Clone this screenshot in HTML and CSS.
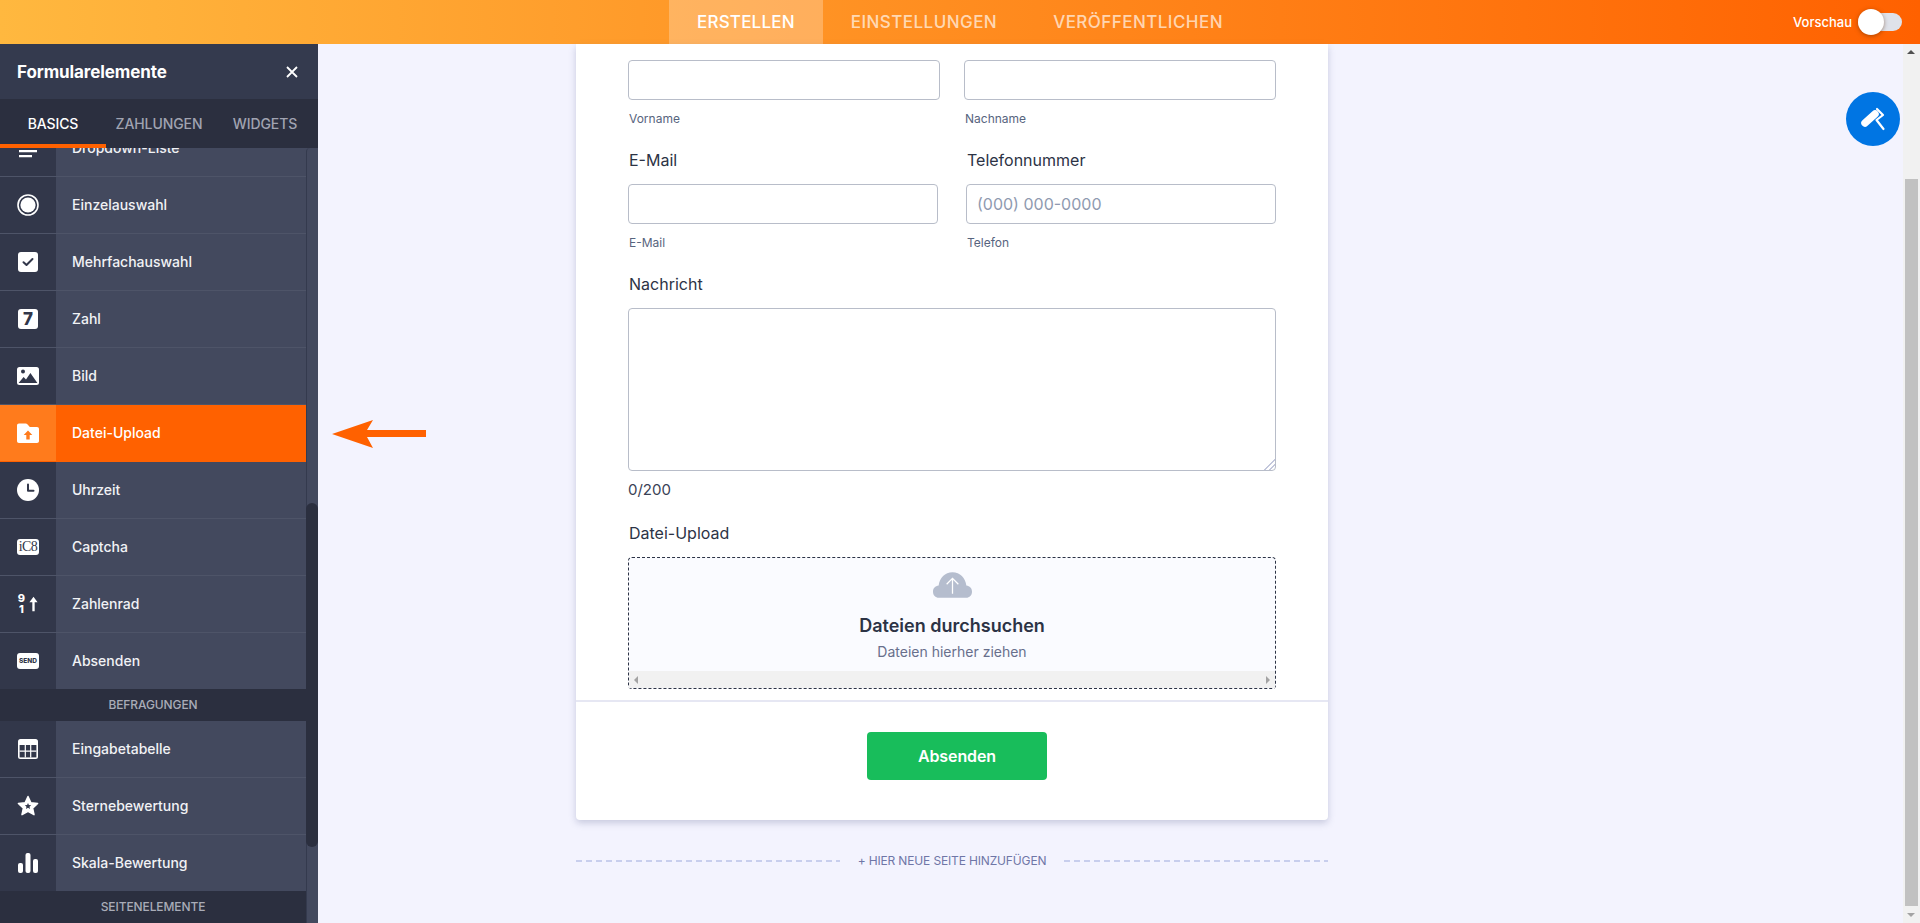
FILE: index.html
```html
<!DOCTYPE html>
<html lang="de">
<head>
<meta charset="utf-8">
<title>Formular erstellen</title>
<link rel="stylesheet" href="styles.css">
</head>
<body>
<header class="topbar">
  <div></div>
  <nav class="topnav">
    <a class="topnav-item is-active">ERSTELLEN</a>
    <a class="topnav-item">EINSTELLUNGEN</a>
    <a class="topnav-item">VERÖFFENTLICHEN</a>
  </nav>
  <div class="preview">
    <span class="preview-label">Vorschau</span>
    <span class="toggle"><span class="toggle-knob"></span></span>
  </div>
</header>

<div class="workspace">
  <aside class="sidebar">
    <div class="side-head">
      <span class="side-title">Formularelemente</span>
      <svg class="side-close" viewBox="0 0 12 12"><path d="M1 1l10 10M11 1L1 11"/></svg>
    </div>
    <div class="side-tabs">
      <span class="side-tab is-active">BASICS</span>
      <span class="side-tab">ZAHLUNGEN</span>
      <span class="side-tab">WIDGETS</span>
    </div>
    <div class="side-body">
      <div class="side-list">
        <div class="el el-first"><span class="el-icon"><svg viewBox="0 0 24 24" class="ico"><path class="w" d="M3 4h18v2.200H3zM3 9h18v2.200H3zM3 14h18v2.200H3zM3 19h13v2.200H3z"/></svg></span><span class="el-name">Dropdown-Liste</span></div>
        <div class="el"><span class="el-icon"><svg viewBox="0 0 24 24" class="ico"><circle cx="12" cy="12" r="10" class="ring"/><circle cx="12" cy="12" r="7.600" class="w"/></svg></span><span class="el-name">Einzelauswahl</span></div>
        <div class="el"><span class="el-icon"><svg viewBox="0 0 24 24" class="ico"><rect x="2" y="2" width="20" height="20" rx="3" class="w"/><path d="M7.500 12.200l3 2.800 6-6" class="dk"/></svg></span><span class="el-name">Mehrfachauswahl</span></div>
        <div class="el"><span class="el-icon"><span class="badge-7">7</span></span><span class="el-name">Zahl</span></div>
        <div class="el"><span class="el-icon"><svg viewBox="0 0 24 24" class="ico"><rect x="1" y="3" width="22" height="18" rx="2.500" class="w"/><circle cx="7" cy="7.600" r="2" class="df"/><path d="M2.600 19l5-6 2.400 2.400L14.400 9l7 10z" class="df"/></svg></span><span class="el-name">Bild</span></div>
        <div class="el is-active"><span class="el-icon"><svg viewBox="0 0 24 24" class="ico"><path class="w" d="M3 2.500h6.600c.8 0 1.400.3 2 1l2.200 2.600H21c1.200 0 2 .8 2 2V20c0 1.200-.8 2-2 2H3c-1.200 0-2-.8-2-2V4.500c0-1.200.8-2 2-2z"/><path d="M12 9.500l4.300 4.500h-2.600v4.500h-3.400V14H7.700z" class="of"/></svg></span><span class="el-name">Datei-Upload</span></div>
        <div class="el"><span class="el-icon"><svg viewBox="0 0 24 24" class="ico"><circle cx="12" cy="12" r="11" class="w"/><path d="M12 6.500v6.300h5.500" class="dk"/></svg></span><span class="el-name">Uhrzeit</span></div>
        <div class="el"><span class="el-icon"><span class="badge-cap">iC8</span></span><span class="el-name">Captcha</span></div>
        <div class="el"><span class="el-icon"><span class="spinner"><span class="spin-nums"><b>9</b><b>1</b></span><svg viewBox="0 0 10 16" class="spin-arrow"><path class="w" d="M5 0l4.500 6H6.300v10H3.700V6H.5z"/></svg></span></span><span class="el-name">Zahlenrad</span></div>
        <div class="el el-last"><span class="el-icon"><span class="badge-send">SEND</span></span><span class="el-name">Absenden</span></div>
        <div class="group">BEFRAGUNGEN</div>
        <div class="el"><span class="el-icon"><svg viewBox="0 0 24 24" class="ico"><rect x="2" y="2" width="20" height="20" rx="2.500" class="w"/><path d="M3.600 8h16.800v12.400H3.600z" class="df"/><path class="w" d="M8.700 8h1.200v12.400H8.700zM14.100 8h1.200v12.400h-1.200zM3.600 13.600h16.800v1.200H3.600z"/></svg></span><span class="el-name">Eingabetabelle</span></div>
        <div class="el"><span class="el-icon"><svg viewBox="0 0 24 24" class="ico"><path class="w wl" d="M12 2.500l2.900 6.200 6.700.8-5 4.600 1.400 6.600-6-3.400-6 3.400 1.400-6.600-5-4.600 6.700-.8z"/><path class="df" d="M12 9l.9 2.100 2.300.2-1.700 1.500.5 2.200-2-1.200-2 1.200.5-2.200-1.700-1.500 2.300-.2z"/></svg></span><span class="el-name">Sternebewertung</span></div>
        <div class="el el-last"><span class="el-icon"><svg viewBox="0 0 24 24" class="ico"><rect x="2" y="12" width="5" height="10" rx="2" class="w"/><rect x="9.500" y="2" width="5" height="20" rx="2" class="w"/><rect x="17" y="8" width="5" height="14" rx="2" class="w"/></svg></span><span class="el-name">Skala-Bewertung</span></div>
        <div class="group">SEITENELEMENTE</div>
      </div>
      <div class="side-scroll"><span class="side-thumb"></span></div>
    </div>
  </aside>

  <main class="canvas">
    <section class="card">
      <div class="card-body">
        <div class="row">
          <div class="field w312"><input class="input" type="text" aria-label="Vorname"><div class="sub">Vorname</div></div>
          <div class="field w312"><input class="input" type="text" aria-label="Nachname"><div class="sub">Nachname</div></div>
        </div>
        <div class="row row-wide">
          <div class="field w310"><label class="lbl">E-Mail</label><input class="input" type="text" aria-label="E-Mail"><div class="sub">E-Mail</div></div>
          <div class="field w310"><label class="lbl">Telefonnummer</label><input class="input" type="text" placeholder="(000) 000-0000"><div class="sub">Telefon</div></div>
        </div>
        <div class="block">
          <label class="lbl">Nachricht</label>
          <textarea class="area" aria-label="Nachricht"></textarea>
          <div class="count">0/200</div>
        </div>
        <div class="block">
          <label class="lbl">Datei-Upload</label>
          <div class="drop">
            <div class="drop-main">
              <svg class="cloud" viewBox="0 0 40 26"><path class="cloud-f" d="M6 26C2.500 26 0 23.300 0 19.800c0-3.300 2.300-5.800 5.800-6.200C6.700 6 12.300 0 20 0s13.300 6 14.200 13.600c3.500.4 5.800 2.900 5.800 6.200 0 3.500-2.500 6.200-6 6.200z"/><path class="cloud-s" d="M20 22V6.500M14 12.200l6-6 6 6"/></svg>
              <div class="drop-title">Dateien durchsuchen</div>
              <div class="drop-sub">Dateien hierher ziehen</div>
            </div>
            <div class="hscroll"><span class="tri-l"></span><span class="tri-r"></span></div>
          </div>
        </div>
      </div>
      <div class="card-foot"><button class="submit" type="button">Absenden</button></div>
    </section>
    <div class="addpage"><span class="dash"></span><span class="addpage-text">+ HIER NEUE SEITE HINZUFÜGEN</span><span class="dash"></span></div>
  </main>

  <div class="vscroll"><span class="tri-u"></span><span class="vthumb"></span><span class="tri-d"></span></div>
</div>

<svg class="pointer" viewBox="0 0 94 28"><path d="M0 14L41 0l-6 10h59v7H35l6 11z"/></svg>
<button class="paint" type="button" aria-label="Design"><svg viewBox="0 0 54 54"><path class="paint-roller" d="M19 31l10-9"/><path class="paint-line" d="M31 17l6 6-6.500 5 7 9"/></svg></button>
</body>
</html>
```
FILE: styles.css
```css
* { box-sizing: border-box; }
html, body { margin: 0; height: 923px; overflow: hidden; }
body { position: relative; background: #f3f3fe; font-family: Inter, "Liberation Sans", sans-serif; color: #2c3345; }

.topbar { height: 44px; display: grid; grid-template-columns: 1fr auto 1fr; background: linear-gradient(90deg, #ffb83f, #ff6100); }
.topnav { display: flex; }
.topnav-item { display: flex; align-items: center; padding: 0 28px; font-size: 17px; font-weight: 500; letter-spacing: .45px; color: rgba(255,255,255,.68); }
.topnav-item.is-active { background: rgba(255,255,255,.26); color: #fff; letter-spacing: .2px; }
.preview { display: flex; align-items: center; justify-content: flex-end; padding-right: 18px; gap: 6px; }
.preview-label { font-size: 13px; font-weight: 500; color: #fff; }
.toggle { position: relative; width: 44px; height: 18px; border-radius: 9px; background: #dfe2ea; }
.toggle-knob { position: absolute; left: 0; top: -4px; width: 26px; height: 26px; border-radius: 50%; background: #fff; box-shadow: 0 1px 4px rgba(90,40,0,.5); }

.workspace { display: flex; height: 879px; }
.sidebar { width: 318px; flex: none; display: flex; flex-direction: column; background: #43495e; }
.side-head { height: 55px; flex: none; display: flex; align-items: center; justify-content: space-between; padding: 0 20px 0 17px; background: #343a4e; }
.side-title { font-size: 17px; font-weight: 700; color: #fff; letter-spacing: -.1px; }
.side-close { width: 12px; height: 12px; fill: none; stroke: #fff; stroke-width: 1.800; }
.side-tabs { height: 49px; flex: none; display: flex; background: #2b2f3f; position: relative; z-index: 1; }
.side-tab { width: 106px; height: 49px; display: flex; align-items: center; justify-content: center; padding-bottom: 1px; font-size: 14px; font-weight: 500; letter-spacing: -.1px; color: #a0a3b1; }
.side-tab.is-active { color: #fff; border-bottom: 4px solid #ff6100; padding-top: 4px; }
.side-body { position: relative; flex: 1; min-height: 0; display: flex; overflow: hidden; }
.side-list { width: 306px; flex: none; }
.el { height: 57px; display: flex; border-bottom: 1px solid #4e5468; background: #43495e; }
.el-first { margin-top: -28px; }
.el-last { height: 56px; border-bottom: 0; }
.el-icon { width: 56px; flex: none; display: flex; align-items: center; justify-content: center; background: #32374a; }
.el-name { padding: 0 0 2px 16px; align-self: center; font-size: 14px; font-weight: 500; color: #f1f2f5; }
.el.is-active { background: #ff6100; border-bottom-color: #ff6100; }
.el.is-active .el-icon { background: #ff7b1c; }
.el.is-active .el-name { color: #fff; }
.group { height: 32px; display: flex; align-items: center; justify-content: center; padding-bottom: 1px; background: #2b2f3f; font-size: 12px; font-weight: 500; letter-spacing: -.1px; color: #a9acb8; }
.side-scroll { position: relative; width: 12px; flex: none; background: #43495e; border-left: 1px solid #343a4e; border-radius: 4px 4px 0 0; }
.side-thumb { position: absolute; left: -1px; right: 0; top: 355px; height: 344px; border-radius: 6px; background: #2b2f3f; }

.ico { width: 24px; height: 24px; display: block; }
.w { fill: #fff; }
.wl { stroke: #fff; stroke-width: 1.500; stroke-linejoin: round; }
.df { fill: #32374a; }
.of { fill: #ff7b1c; }
.ring { fill: none; stroke: #fff; stroke-width: 1.600; }
.dk { fill: none; stroke: #32374a; stroke-width: 2; stroke-linecap: round; stroke-linejoin: round; }
.badge-7 { width: 20px; height: 20px; display: flex; align-items: center; justify-content: center; border-radius: 3px; background: #fff; font-size: 17px; font-weight: 800; color: #32374a; }
.badge-cap { width: 22px; height: 16px; display: flex; align-items: center; justify-content: center; border-radius: 3px; background: #fff; font-family: "Liberation Serif", serif; font-size: 14px; letter-spacing: -.5px; font-weight: 400; color: #32374a; }
.badge-send { width: 22px; height: 16px; display: flex; align-items: center; justify-content: center; border-radius: 3px; background: #fff; font-size: 6.500px; font-weight: 800; color: #32374a; }
.spinner { display: flex; align-items: center; gap: 4px; }
.spin-nums { display: flex; flex-direction: column; align-items: center; }
.spin-nums b { font-size: 11px; line-height: 11px; font-weight: 800; color: #fff; }
.spin-arrow { width: 9px; height: 16px; }

.canvas { flex: 1; min-width: 0; padding-left: 258px; }
.card { width: 752px; background: #fff; border-radius: 0 0 4px 4px; box-shadow: 0 3px 7px rgba(86,92,140,.28); }
.card-body { padding: 16px 52px 11px; border-bottom: 2px solid #e6e7f3; }
.row { display: flex; gap: 24px; margin-bottom: 20px; }
.row-wide { gap: 28px; }
.w312 { width: 312px; } .w310 { width: 310px; }
.input { display: block; width: 100%; height: 40px; padding: 0 10px; border: 1px solid #b8bdc9; border-radius: 4px; background: #fff; outline: 0; font: 400 16px Inter, sans-serif; color: #2c3345; }
.input::placeholder { color: #8f9ab0; opacity: 1; }
.sub { margin: 10px 0 0 1px; font-size: 12px; line-height: 18px; color: #57647e; }
.lbl { display: block; margin: 0 0 12px 1px; font-size: 16px; line-height: 24px; color: #2c3345; }
.block { margin-bottom: 19px; }
.block:last-child { margin-bottom: 0; }
.area { display: block; width: 100%; height: 163px; border: 1px solid #b8bdc9; border-radius: 4px; background: #fff; outline: 0; }
.area::-webkit-resizer { background: linear-gradient(135deg, transparent 62%, #c3c7dc 62% 68%, transparent 68% 80%, #c3c7dc 80% 86%, transparent 86%); }
.count { margin-top: 7px; font-size: 15px; line-height: 24px; color: #3a4256; }
.drop { height: 132px; display: flex; flex-direction: column; border: 1px dashed #2c3345; border-radius: 4px; background: #fafbff; }
.drop-main { flex: 1; display: flex; flex-direction: column; align-items: center; padding-top: 14px; }
.cloud { width: 39px; height: 26px; display: block; }
.cloud-f { fill: #b5bdce; }
.cloud-s { fill: none; stroke: #fff; stroke-width: 1.300; }
.drop-title { margin-top: 16px; font-size: 18px; line-height: 24px; font-weight: 600; color: #2c3345; }
.drop-sub { margin-top: 4px; font-size: 14px; line-height: 20px; color: #686f8c; }
.hscroll { height: 17px; flex: none; display: flex; align-items: center; justify-content: space-between; padding: 0 5px; background: #f1f1f1; }
.tri-l { border: 4px solid transparent; border-left: 0; border-right: 4px solid #a3a3a3; }
.tri-r { border: 4px solid transparent; border-right: 0; border-left: 4px solid #a3a3a3; }
.card-foot { display: flex; justify-content: center; padding: 30px 0 40px 10px; }
.submit { width: 180px; height: 48px; border: 0; border-radius: 4px; background: #18bd5b; font: 600 16px Inter, sans-serif; letter-spacing: -.1px; color: #fff; }
.addpage { display: flex; align-items: center; width: 752px; margin-top: 34px; height: 14px; }
.dash { flex: 1; height: 2px; background: repeating-linear-gradient(90deg, #c8ceed 0 6px, transparent 6px 10px); }
.addpage-text { padding: 0 18px; font-size: 12px; line-height: 14px; letter-spacing: -.15px; color: #6f76a7; }

.vscroll { width: 17px; flex: none; position: relative; background: #f1f1f1; }
.vthumb { position: absolute; left: 2px; width: 13px; top: 135px; bottom: 17px; background: #c1c1c1; }
.tri-u { position: absolute; left: 4px; top: 6px; border: 4px solid transparent; border-top: 0; border-bottom: 4px solid #505050; }
.tri-d { position: absolute; left: 4px; bottom: 6px; border: 4px solid transparent; border-bottom: 0; border-top: 4px solid #a3a3a3; }

.pointer { position: absolute; left: 332px; top: 420px; width: 94px; height: 28px; fill: #ff6100; }
.paint { position: absolute; left: 1846px; top: 92px; width: 54px; height: 54px; padding: 0; border: 0; border-radius: 50%; background: #0075e3; }
.paint svg { display: block; width: 54px; height: 54px; }
.paint-roller { fill: none; stroke: #fff; stroke-width: 7.500; stroke-linecap: round; }
.paint-line { fill: none; stroke: #fff; stroke-width: 2.200; stroke-linecap: round; stroke-linejoin: round; }
```
